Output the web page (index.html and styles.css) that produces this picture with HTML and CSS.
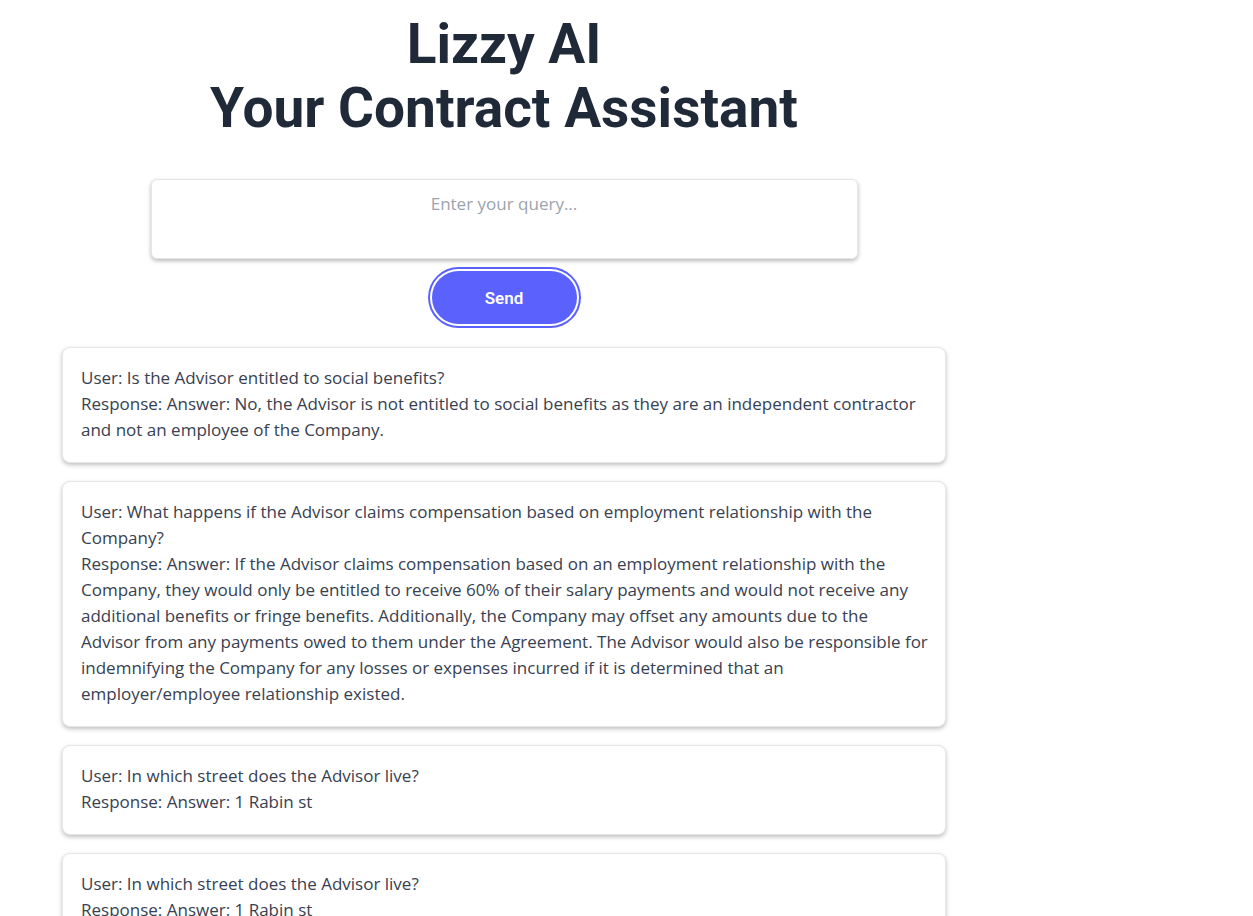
FILE: index.html
```html
<!DOCTYPE html>
<html lang="en">
<head>
<meta charset="utf-8">
<title>Lizzy AI</title>
<link rel="stylesheet" href="styles.css">
</head>
<body>
<main class="app">
  <h1 class="title">Lizzy AI<br>Your Contract Assistant</h1>
  <form class="query-form">
    <textarea class="query-input" placeholder="Enter your query..."></textarea>
    <button type="button" class="send-btn">Send</button>
  </form>
  <section class="history">
    <article class="card">
      <p class="line">User: Is the Advisor entitled to social benefits?</p>
      <p class="line">Response: Answer: No, the Advisor is not entitled to social benefits as they are an independent contractor and not an employee of the Company.</p>
    </article>
    <article class="card">
      <p class="line">User: What happens if the Advisor claims compensation based on employment relationship with the Company?</p>
      <p class="line">Response: Answer: If the Advisor claims compensation based on an employment relationship with the Company, they would only be entitled to receive 60% of their salary payments and would not receive any additional benefits or fringe benefits. Additionally, the Company may offset any amounts due to the Advisor from any payments owed to them under the Agreement. The Advisor would also be responsible for indemnifying the Company for any losses or expenses incurred if it is determined that an employer/employee relationship existed.</p>
    </article>
    <article class="card">
      <p class="line">User: In which street does the Advisor live?</p>
      <p class="line">Response: Answer: 1 Rabin st</p>
    </article>
    <article class="card">
      <p class="line">User: In which street does the Advisor live?</p>
      <p class="line">Response: Answer: 1 Rabin st</p>
    </article>
  </section>
</main>
</body>
</html>
```

FILE: styles.css
```css
* { box-sizing: border-box; }

html, body {
  margin: 0;
  padding: 0;
  background: #ffffff;
}

body {
  font-family: "Open Sans", "Noto Sans", sans-serif;
  color: #374151;
}

.app {
  width: 884px;
  margin: 0 0 0 62px;
  display: flex;
  flex-direction: column;
  align-items: center;
}

.title {
  margin: 12px 0 0;
  font-family: Roboto, sans-serif;
  font-weight: 700;
  font-size: 55px;
  line-height: 64px;
  color: #1f2937;
  text-align: center;
}

.query-form {
  margin-top: 39px;
  width: 100%;
  display: flex;
  flex-direction: column;
  align-items: center;
}

.query-input {
  display: block;
  width: 707px;
  height: 80px;
  padding: 12px 16px;
  border: 1px solid #e5e7eb;
  border-radius: 6px;
  box-shadow: 0 2px 4px rgba(0, 0, 0, 0.28);
  font-family: "Open Sans", sans-serif;
  font-size: 17px;
  line-height: 24px;
  text-align: center;
  color: #374151;
  resize: none;
  outline: none;
}

.query-input::placeholder {
  color: #9ca3af;
}

.send-btn {
  margin-top: 12px;
  width: 145px;
  height: 53px;
  border: none;
  border-radius: 9999px;
  background: #5a61fc;
  color: #ffffff;
  font-family: Roboto, sans-serif;
  font-weight: 600;
  font-size: 17px;
  box-shadow: 0 0 0 2px #ffffff, 0 0 0 4px #5a61fc;
  cursor: pointer;
}

.history {
  margin-top: 23px;
  width: 100%;
  display: flex;
  flex-direction: column;
  gap: 18px;
}

.card {
  border: 1px solid #e5e7eb;
  border-radius: 8px;
  padding: 17px 16px 19px 18px;
  background: #ffffff;
  box-shadow: 0 2px 4px rgba(0, 0, 0, 0.25);
}

.line {
  margin: 0;
  font-size: 17px;
  line-height: 26px;
}
```
